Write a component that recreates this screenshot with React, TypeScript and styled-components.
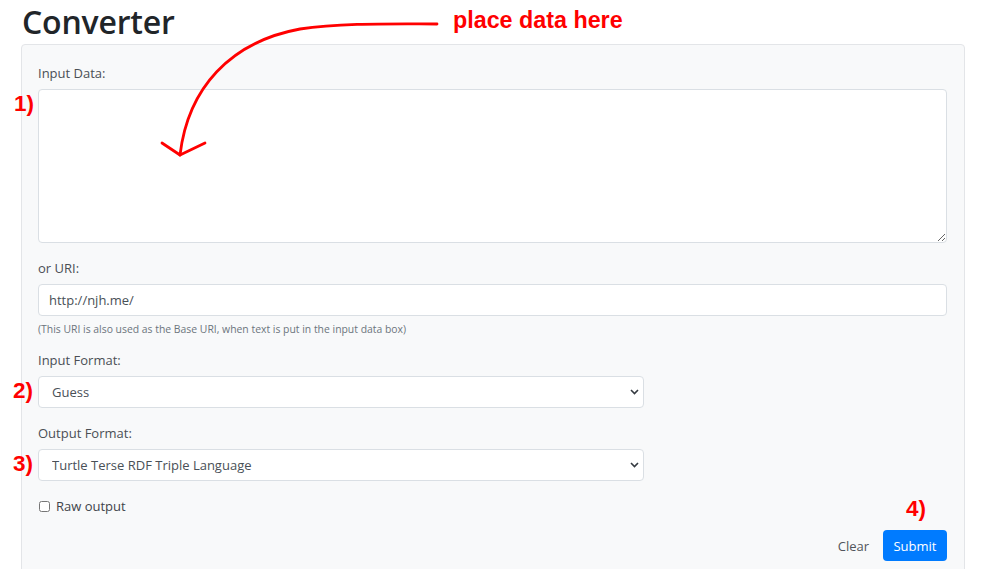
import styled, { createGlobalStyle } from "styled-components";

const GlobalStyle = createGlobalStyle`
  html, body {
    margin: 0;
    padding: 0;
    background: #ffffff;
    font-family: "Open Sans", "Liberation Sans", sans-serif;
  }
  * {
    box-sizing: border-box;
  }
`;

const Page = styled.div`
  position: relative;
  width: 985px;
  height: 569px;
  overflow: hidden;
  padding: 0 21px;
`;

const Title = styled.h1`
  margin: 0 0 0 1px;
  font-size: 32px;
  line-height: 44px;
  height: 44px;
  font-weight: 600;
  color: #212529;
  letter-spacing: -0.2px;
`;

const Card = styled.div`
  width: 944px;
  background: #f8f9fa;
  border: 1px solid #e3e5e8;
  border-radius: 4px;
  padding: 18px 17px 40px 16px;
  display: flex;
  flex-direction: column;
`;

const Group = styled.div<{ $gap?: number }>`
  display: flex;
  flex-direction: column;
  margin-bottom: ${(p) => p.$gap ?? 15}px;
`;

const Label = styled.label`
  font-size: 13px;
  line-height: 20px;
  color: #4a4f55;
  margin-bottom: 6px;
`;

const TextArea = styled.textarea`
  display: block;
  width: 100%;
  height: 154px;
  background: #fff;
  border: 1px solid #dadfe4;
  border-radius: 4px;
  font-family: "Open Sans", "Liberation Sans", sans-serif;
  font-size: 13px;
  padding: 6px 10px;
  outline: none;
`;

const TextInput = styled.input`
  display: block;
  width: 100%;
  height: 32px;
  background: #fff;
  border: 1px solid #dadfe4;
  border-radius: 4px;
  font-family: "Open Sans", "Liberation Sans", sans-serif;
  font-size: 13px;
  color: #495057;
  padding: 0 10px;
  outline: none;
`;

const Help = styled.small`
  display: block;
  margin-top: 6px;
  font-size: 10.4px;
  line-height: 15px;
  color: #6c757d;
`;

const SelectWrap = styled.div`
  position: relative;
  width: 606px;
  height: 32px;
`;

const Select = styled.select`
  display: block;
  width: 100%;
  height: 100%;
  appearance: none;
  background: #fff;
  border: 1px solid #dadfe4;
  border-radius: 4px;
  font-family: "Open Sans", "Liberation Sans", sans-serif;
  font-size: 13px;
  color: #495057;
  padding: 0 13px;
  outline: none;
`;

const Chevron = styled.svg`
  position: absolute;
  right: 5px;
  top: 13px;
  pointer-events: none;
`;

const CheckRow = styled.label`
  display: flex;
  align-items: center;
  gap: 6px;
  height: 20px;
  font-size: 13px;
  color: #3f444a;
  padding-left: 1px;
  input {
    margin: 0;
    width: 11px;
    height: 11px;
  }
`;

const Footer = styled.div`
  display: flex;
  justify-content: flex-end;
  align-items: center;
  gap: 14px;
  margin-top: 14px;
`;

const LinkButton = styled.button`
  border: none;
  background: none;
  padding: 0;
  font-family: "Open Sans", "Liberation Sans", sans-serif;
  font-size: 13px;
  color: #50555b;
  cursor: pointer;
`;

const PrimaryButton = styled.button`
  width: 64px;
  height: 31px;
  border: none;
  border-radius: 4px;
  background: #007bff;
  color: #fff;
  font-family: "Open Sans", "Liberation Sans", sans-serif;
  font-size: 13px;
  cursor: pointer;
`;

const Note = styled.span<{ $x: number; $y: number; $size?: number }>`
  position: absolute;
  left: ${(p) => p.$x}px;
  top: ${(p) => p.$y}px;
  font-family: "Liberation Sans", Arial, sans-serif;
  font-weight: 700;
  font-size: ${(p) => p.$size ?? 22.5}px;
  line-height: 24px;
  color: #ff0000;
  white-space: nowrap;
`;

const Arrow = styled.svg`
  position: absolute;
  left: 0;
  top: 0;
  pointer-events: none;
`;

const FormatSelect = ({ label, value }: { label: string; value: string }) => (
  <SelectWrap>
    <Select defaultValue={value}>
      <option value={value}>{label}</option>
    </Select>
    <Chevron width="9" height="6" viewBox="0 0 9 6">
      <path d="M1 1 L4.5 4.5 L8 1" fill="none" stroke="#343a40" strokeWidth="1.6" />
    </Chevron>
  </SelectWrap>
);

export default function App() {
  return (
    <Page>
      <GlobalStyle />
      <Title>Converter</Title>
      <Card>
        <Group>
          <Label>Input Data:</Label>
          <TextArea />
        </Group>
        <Group $gap={13}>
          <Label>or URI:</Label>
          <TextInput defaultValue="http://njh.me/" />
          <Help>(This URI is also used as the Base URI, when text is put in the input data box)</Help>
        </Group>
        <Group>
          <Label>Input Format:</Label>
          <FormatSelect label="Guess" value="guess" />
        </Group>
        <Group>
          <Label>Output Format:</Label>
          <FormatSelect label="Turtle Terse RDF Triple Language" value="turtle" />
        </Group>
        <CheckRow>
          <input type="checkbox" />
          Raw output
        </CheckRow>
        <Footer>
          <LinkButton>Clear</LinkButton>
          <PrimaryButton>Submit</PrimaryButton>
        </Footer>
      </Card>

      <Arrow width="985" height="569" viewBox="0 0 985 569">
        <path
          d="M437 24 C 390 24, 340 23, 300 29 C 230 42, 188 88, 180 155"
          fill="none"
          stroke="#ff0000"
          strokeWidth="2.8"
          strokeLinecap="round"
        />
        <path
          d="M162 143 L180 155 L205 143"
          fill="none"
          stroke="#ff0000"
          strokeWidth="2.8"
          strokeLinecap="round"
          strokeLinejoin="round"
        />
      </Arrow>
      <Note $x={453} $y={8} $size={23.3}>place data here</Note>
      <Note $x={14} $y={92}>1)</Note>
      <Note $x={13} $y={379}>2)</Note>
      <Note $x={13} $y={452}>3)</Note>
      <Note $x={906} $y={497}>4)</Note>
    </Page>
  );
}
